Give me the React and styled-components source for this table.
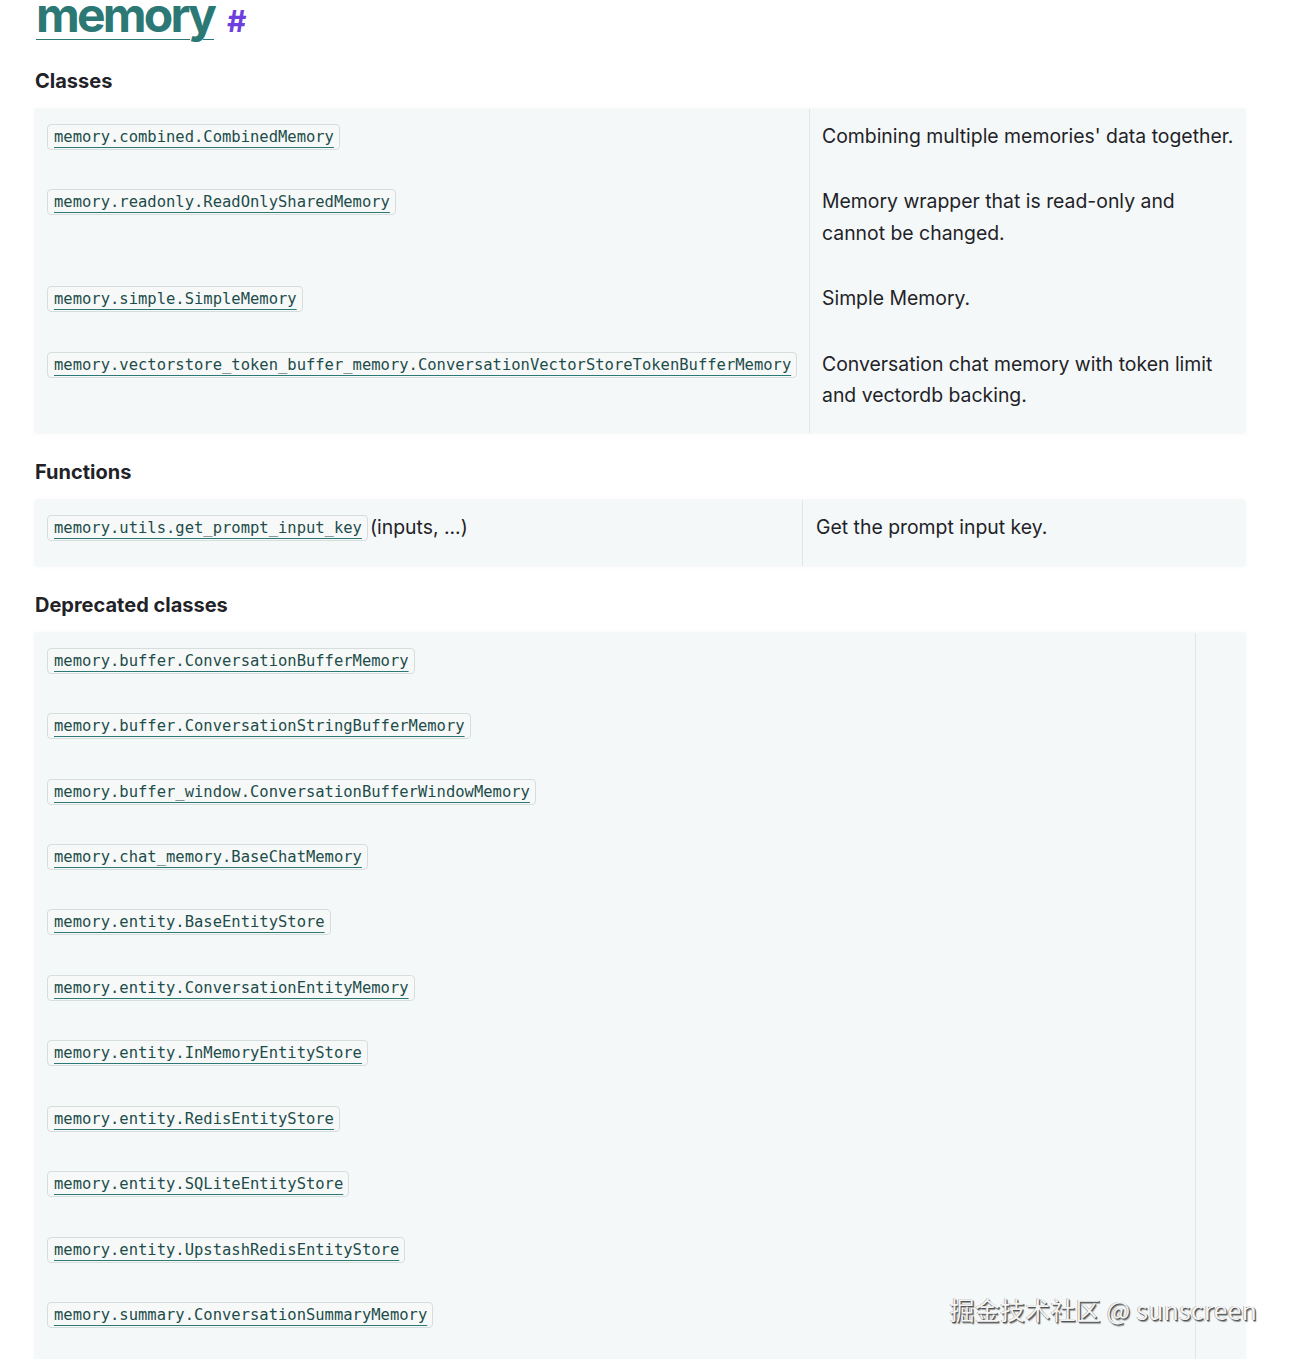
import React from "react";
import styled, { createGlobalStyle } from "styled-components";

const GlobalStyle = createGlobalStyle`
  html, body {
    margin: 0;
    padding: 0;
    background: #ffffff;
  }
  body {
    font-family: Inter, "Noto Sans", "Liberation Sans", sans-serif;
    color: #1f2328;
    overflow: hidden;
  }
`;

const Page = styled.div`
  position: relative;
  width: 1291px;
  height: 1359px;
  overflow: hidden;
  padding: 0 46px 0 35px;
  box-sizing: border-box;
`;

const Title = styled.h1`
  margin: -15px 0 0 1px;
  font-size: 48px;
  font-weight: 700;
  line-height: 60px;
  display: flex;
  align-items: baseline;
  gap: 13px;
`;

const TitleLink = styled.a`
  color: #2b7875;
  letter-spacing: -2.8px;
  text-decoration: underline;
  text-decoration-thickness: 1px;
  text-underline-offset: 7px;
  text-decoration-color: #2b7875;
`;

const Anchor = styled.a`
  color: #6d3fe0;
  font-size: 30px;
  text-decoration: none;
`;

const SectionTitle = styled.h2`
  margin: ${(p) => (p.$first ? "18px" : "27px")} 0 16px;
  font-size: 20px;
  font-weight: 700;
  line-height: 24px;
  color: #1f2328;
`;

const Table = styled.div`
  display: grid;
  grid-template-columns: ${(p) => p.$cols};
  background: #f5f8f8;
  box-shadow: 0 0 3px rgba(200, 210, 210, 0.35);
`;

const Row = styled.div`
  display: contents;
`;

const NameCell = styled.div`
  padding: 12px 12px 22px;
  line-height: 31.4px;
  font-size: 19.4px;
  white-space: nowrap;
`;

const DescCell = styled.div`
  padding: 12px 6px 22px ${(p) => p.$padLeft || 12}px;
  border-left: 1px solid #e1e6e6;
  line-height: 31.4px;
  font-size: 19.4px;
  color: #1f2328;
`;

const Code = styled.a`
  display: inline-block;
  font-family: "DejaVu Sans Mono", "Liberation Mono", monospace;
  font-size: 15.5px;
  line-height: 24px;
  padding: 0 5px 0 6px;
  border: 1px solid #d6dddd;
  border-radius: 4px;
  background: #f7f9f9;
  color: #1d4d4b;
  text-decoration: underline;
  text-decoration-color: #2b7875;
  text-decoration-skip-ink: none;
  text-underline-offset: 5px;
  vertical-align: 1px;
`;

const Args = styled.span`
  margin-left: 2px;
`;

const Watermark = styled.div`
  position: absolute;
  right: 34px;
  top: 1292px;
  font-family: "Noto Sans CJK SC", "Noto Sans", sans-serif;
  font-size: 25px;
  line-height: 34px;
  color: #f4f4f4;
  text-shadow: 1px 1px 0 #555, -0.5px -0.5px 0 #999, 1.5px 1.5px 1px rgba(0,0,0,0.4);
  letter-spacing: 0.2px;
  white-space: nowrap;
`;

const classes = [
  ["memory.combined.CombinedMemory", "Combining multiple memories' data together."],
  ["memory.readonly.ReadOnlySharedMemory", "Memory wrapper that is read-only and cannot be changed."],
  ["memory.simple.SimpleMemory", "Simple Memory."],
  [
    "memory.vectorstore_token_buffer_memory.ConversationVectorStoreTokenBufferMemory",
    "Conversation chat memory with token limit and vectordb backing.",
  ],
];

const deprecated = [
  "memory.buffer.ConversationBufferMemory",
  "memory.buffer.ConversationStringBufferMemory",
  "memory.buffer_window.ConversationBufferWindowMemory",
  "memory.chat_memory.BaseChatMemory",
  "memory.entity.BaseEntityStore",
  "memory.entity.ConversationEntityMemory",
  "memory.entity.InMemoryEntityStore",
  "memory.entity.RedisEntityStore",
  "memory.entity.SQLiteEntityStore",
  "memory.entity.UpstashRedisEntityStore",
  "memory.summary.ConversationSummaryMemory",
  "memory.summary.ConversationSummaryBufferMemory",
];

export default function App() {
  return (
    <Page>
      <GlobalStyle />
      <Title>
        <TitleLink href="#">memory</TitleLink>
        <Anchor href="#">#</Anchor>
      </Title>

      <SectionTitle $first>Classes</SectionTitle>
      <Table $cols="774px 1fr">
        {classes.map(([name, desc]) => (
          <Row key={name}>
            <NameCell>
              <Code href="#">{name}</Code>
            </NameCell>
            <DescCell>{desc}</DescCell>
          </Row>
        ))}
      </Table>

      <SectionTitle>Functions</SectionTitle>
      <Table $cols="767px 1fr">
        <Row>
          <NameCell>
            <Code href="#">memory.utils.get_prompt_input_key</Code>
            <Args>(inputs, ...)</Args>
          </NameCell>
          <DescCell $padLeft={13}>Get the prompt input key.</DescCell>
        </Row>
      </Table>

      <SectionTitle>Deprecated classes</SectionTitle>
      <Table $cols="1160px 1fr">
        {deprecated.map((name) => (
          <Row key={name}>
            <NameCell>
              <Code href="#">{name}</Code>
            </NameCell>
            <DescCell />
          </Row>
        ))}
      </Table>

      <Watermark>掘金技术社区 @ sunscreen</Watermark>
    </Page>
  );
}
